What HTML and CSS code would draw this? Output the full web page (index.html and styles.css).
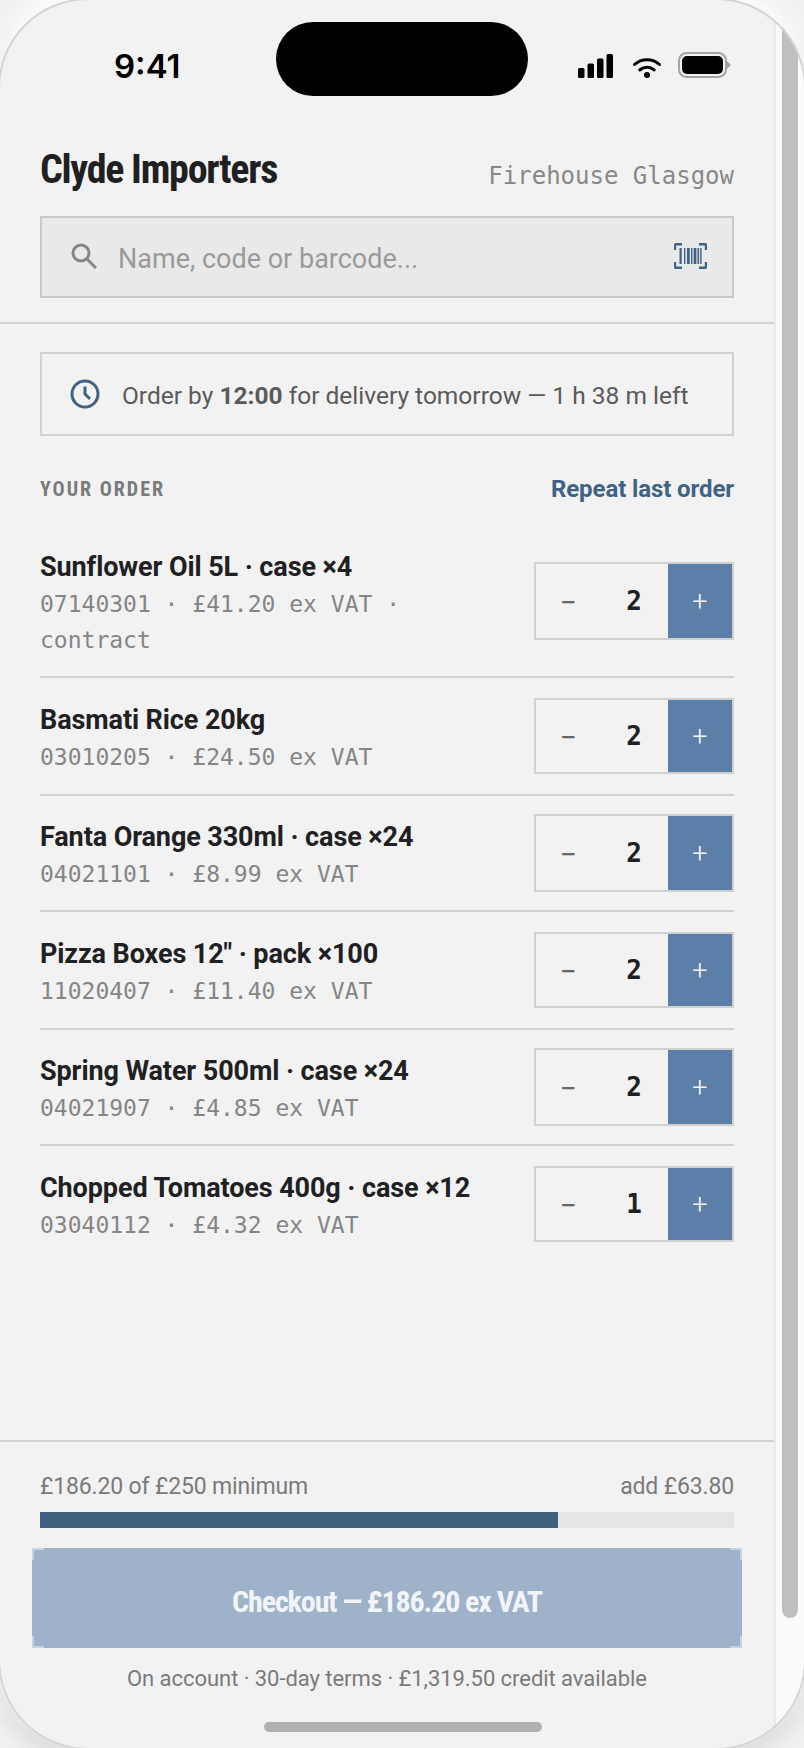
FILE: index.html
```html
<!DOCTYPE html>
<html lang="en">
<head>
<meta charset="utf-8">
<title>Clyde Importers</title>
<link rel="stylesheet" href="styles.css">
</head>
<body>
<div class="phone">
  <div class="notch"></div>
  <div class="home-bar"></div>
  <div class="screen">
    <div class="status">
      <span class="time">9:41</span>
      <div class="status-icons">
        <svg class="sig" viewBox="0 0 35 24"><rect x="0" y="14" width="6.5" height="10" rx="1.5"/><rect x="9.5" y="9.5" width="6.5" height="14.5" rx="1.5"/><rect x="19" y="4.5" width="6.5" height="19.5" rx="1.5"/><rect x="28.5" y="0" width="6.5" height="24" rx="1.5"/></svg>
        <svg class="wifi" viewBox="0 0 28 21"><path d="M1.5 7.5a18.5 18.5 0 0 1 25 0" fill="none" stroke="#000" stroke-width="3" stroke-linecap="round"/><path d="M6.8 13a11 11 0 0 1 14.4 0" fill="none" stroke="#000" stroke-width="3" stroke-linecap="round"/><circle cx="14" cy="18" r="3"/></svg>
        <svg class="batt" viewBox="0 0 53 26"><rect x="1" y="1" width="47" height="24" rx="7.5" fill="none" stroke="#a3a3a3" stroke-width="2"/><rect x="4" y="4" width="41" height="18" rx="5"/><path d="M49 9l4 4-4 4z" fill="#a3a3a3"/></svg>
      </div>
    </div>
    <header class="head">
      <div class="title-row">
        <h1 class="title">Clyde Importers</h1>
        <span class="site">Firehouse Glasgow</span>
      </div>
      <div class="search">
        <svg class="mag" viewBox="0 0 26 26"><circle cx="10" cy="10" r="8" fill="none" stroke="#868686" stroke-width="3"/><path d="M16 16l9 9" stroke="#868686" stroke-width="3"/></svg>
        <span class="ph">Name, code or barcode...</span>
        <svg class="barcode" viewBox="0 0 33 26"><path d="M8 1.2H2a1 1 0 0 0-1 1V7M25 1.2h6a1 1 0 0 1 1 1V7M8 24.8H2a1 1 0 0 1-1-1V19M25 24.8h6a1 1 0 0 0 1-1V19" fill="none" stroke="#3f6285" stroke-width="2.4"/><path d="M5.5 5h2.2v16H5.5zM10 5h1.4v16H10zM13 5h2.8v16H13zM17 5h1.4v16H17zM19.6 5h2.8v16h-2.8zM23.5 5h1.6v16h-1.6zM26.2 5h1.4v16h-1.4z" fill="#3f6285"/></svg>
      </div>
    </header>
    <div class="deadline">
      <svg class="clock" viewBox="0 0 30 30"><circle cx="15" cy="15" r="13" fill="none" stroke="#3f6285" stroke-width="3"/><path d="M15 7.5V15l5 5" fill="none" stroke="#3f6285" stroke-width="3"/></svg>
      <span class="deadline-text">Order by <b>12:00</b> for delivery tomorrow — 1 h 38 m left</span>
    </div>
    <div class="section">
      <span class="eyebrow">YOUR ORDER</span>
      <a class="repeat">Repeat last order</a>
    </div>
    <main class="list">
      <div class="row">
        <div class="info"><div class="name">Sunflower Oil 5L · case ×4</div><div class="meta">07140301 · £41.20 ex VAT · contract</div></div>
        <div class="stepper"><span class="minus">−</span><span class="qty">2</span><span class="plus">+</span></div>
      </div>
      <div class="row">
        <div class="info"><div class="name">Basmati Rice 20kg</div><div class="meta">03010205 · £24.50 ex VAT</div></div>
        <div class="stepper"><span class="minus">−</span><span class="qty">2</span><span class="plus">+</span></div>
      </div>
      <div class="row">
        <div class="info"><div class="name">Fanta Orange 330ml · case ×24</div><div class="meta">04021101 · £8.99 ex VAT</div></div>
        <div class="stepper"><span class="minus">−</span><span class="qty">2</span><span class="plus">+</span></div>
      </div>
      <div class="row">
        <div class="info"><div class="name">Pizza Boxes 12" · pack ×100</div><div class="meta">11020407 · £11.40 ex VAT</div></div>
        <div class="stepper"><span class="minus">−</span><span class="qty">2</span><span class="plus">+</span></div>
      </div>
      <div class="row">
        <div class="info"><div class="name">Spring Water 500ml · case ×24</div><div class="meta">04021907 · £4.85 ex VAT</div></div>
        <div class="stepper"><span class="minus">−</span><span class="qty">2</span><span class="plus">+</span></div>
      </div>
      <div class="row">
        <div class="info"><div class="name">Chopped Tomatoes 400g · case ×12</div><div class="meta">03040112 · £4.32 ex VAT</div></div>
        <div class="stepper"><span class="minus">−</span><span class="qty">1</span><span class="plus">+</span></div>
      </div>
    </main>
    <footer class="foot">
      <div class="progress-label"><span>£186.20 of £250 minimum</span><span>add £63.80</span></div>
      <div class="track"><div class="fill" style="width:74.6%"></div></div>
      <button class="checkout">Checkout — £186.20 ex VAT</button>
      <p class="terms">On account · 30-day terms · £1,319.50 credit available</p>
    </footer>
  </div>
  <div class="scrollbar"><div class="thumb"></div></div>
</div>
</body>
</html>
```
FILE: styles.css
```css
* { box-sizing: border-box; }
html, body { margin: 0; padding: 0; }
body {
  width: 804px;
  height: 1748px;
  overflow: hidden;
  background: #f1f1f1;
  font-family: Roboto, "Liberation Sans", sans-serif;
  color: #1f2022;
}
.phone {
  position: relative;
  width: 808px;
  height: 1752px;
  margin: -2px;
  padding: 2px;
  display: flex;
  border-radius: 90px;
  background: #fafafa;
  box-shadow: 0 -10px 22px #fff, 0 10px 24px rgba(0, 0, 0, .13);
  overflow: hidden;
}
.phone::after {
  content: "";
  position: absolute;
  inset: 0;
  border: 2px solid #d4d4d4;
  border-radius: 90px;
  z-index: 3;
  pointer-events: none;
}
.notch {
  position: absolute;
  left: 278px;
  top: 24px;
  width: 252px;
  height: 74px;
  border-radius: 37px;
  background: #000;
  z-index: 2;
}
.home-bar {
  position: absolute;
  left: 266px;
  top: 1724px;
  width: 278px;
  height: 10px;
  border-radius: 5px;
  background: #b0b0b0;
  z-index: 2;
}
.screen {
  width: 776px;
  height: 100%;
  flex: none;
  display: flex;
  flex-direction: column;
  background: #f2f2f2;
  border-right: 2px solid #eaeaea;
}
.scrollbar {
  flex: 1;
  padding: 0 6px;
}
.thumb {
  width: 16px;
  height: 1618px;
  background: #bfbfbf;
  border-radius: 8px;
}
.status {
  height: 120px;
  flex: none;
  display: flex;
  justify-content: space-between;
  align-items: flex-start;
  padding: 46px 43px 0 114px;
}
.time {
  font-family: Inter, sans-serif;
  font-weight: 600;
  font-size: 33px;
  line-height: 40px;
  color: #000;
}
.status-icons { display: flex; align-items: flex-start; padding-top: 6px; }
.sig { width: 35px; height: 24px; margin-top: 2px; }
.wifi { width: 28px; height: 21px; margin: 5px 17px 0 20px; }
.batt { width: 53px; height: 26px; }
.head {
  flex: none;
  padding: 0 40px 24px;
  border-bottom: 2px solid #d2d2d2;
}
.title-row {
  display: flex;
  justify-content: space-between;
  align-items: flex-end;
  height: 96px;
  padding-bottom: 21px;
}
.title {
  margin: 0;
  font-family: "Roboto Condensed", "Liberation Sans Narrow", Roboto, sans-serif;
  font-weight: 700;
  font-size: 40px;
  line-height: 50px;
  letter-spacing: -1.25px;
}
.site {
  font-family: "DejaVu Sans Mono", monospace;
  font-size: 24px;
  line-height: 30px;
  color: #888;
  margin-bottom: 4px;
}
.search {
  height: 82px;
  display: flex;
  align-items: center;
  padding: 0 25px 0 29px;
  background: #e9e9e9;
  border: 2px solid #c8c8c8;
}
.mag { width: 26px; height: 26px; flex: none; margin-top: -3px; }
.ph {
  flex: 1;
  margin-left: 21px;
  padding-top: 3px;
  font-size: 27px;
  color: #9a9a9a;
}
.barcode { width: 33px; height: 26px; flex: none; margin-top: -2px; }
.deadline {
  flex: none;
  height: 84px;
  margin: 28px 40px 0;
  display: flex;
  align-items: center;
  padding: 0 0 0 28px;
  border: 2px solid #d0d0d0;
}
.clock { width: 30px; height: 30px; flex: none; }
.deadline-text {
  margin-left: 22px;
  padding-top: 2px;
  font-size: 24.5px;
  color: #5a5a5a;
}
.deadline-text b { font-weight: 700; }
.section {
  flex: none;
  height: 90px;
  margin: 0 40px;
  padding-top: 16px;
  display: flex;
  justify-content: space-between;
  align-items: center;
}
.eyebrow {
  font-family: "Roboto Condensed", "Liberation Sans Narrow", Roboto, sans-serif;
  font-weight: 700;
  font-size: 20px;
  letter-spacing: 2px;
  color: #7a7a7a;
}
.repeat {
  font-size: 24px;
  font-weight: 700;
  letter-spacing: -.1px;
  color: #3f6285;
}
.list {
  flex: 1;
  padding: 0 40px;
  min-height: 0;
}
.row {
  display: flex;
  align-items: center;
  justify-content: space-between;
  gap: 24px;
  padding: 20px 0;
  border-bottom: 2px solid #d0d0d0;
}
.row:nth-child(odd) { padding: 18px 0; }
.row:first-child { padding: 20.5px 0; }
.row:last-child { border-bottom: 0; }
.info { min-width: 0; flex: 1; margin: 2px 0 -2px; }
.name {
  font-size: 27px;
  font-weight: 700;
  letter-spacing: -.1px;
  line-height: 36px;
  color: #1f2022;
}
.meta {
  margin-top: 1px;
  font-family: "DejaVu Sans Mono", monospace;
  font-size: 23px;
  line-height: 36px;
  color: #858585;
}
.stepper {
  flex: none;
  width: 200px;
  height: 76px;
  display: grid;
  grid-template-columns: 64px 68px 64px;
  align-items: stretch;
  border: 2px solid #d0d0d0;
}
.row:nth-child(odd) .stepper { height: 78px; }
.minus, .qty, .plus {
  display: flex;
  align-items: center;
  justify-content: center;
}
.minus { font-size: 30px; padding-top: 2px; color: #666; }
.qty {
  padding-bottom: 1px;
  font-family: "DejaVu Sans Mono", monospace;
  font-weight: 700;
  font-size: 26px;
  color: #1f2022;
}
.plus {
  padding-top: 2px;
  font-size: 27px;
  font-weight: 300;
  color: #f4f6f8;
  background: #5b7fa6;
}
.foot {
  flex: none;
  height: 308px;
  padding: 0 40px;
  border-top: 2px solid #d2d2d2;
}
.progress-label {
  display: flex;
  justify-content: space-between;
  height: 70px;
  padding-top: 30px;
  font-size: 23px;
  letter-spacing: -.15px;
  line-height: 30px;
  color: #7a7a7a;
}
.track { height: 16px; background: #e6e6e8; }
.fill { height: 100%; background: #3f6180; }
.checkout {
  display: block;
  width: 710px;
  height: 100px;
  margin: 20px -8px 0;
  padding: 6px 0 0;
  border: 0;
  color: #f2f5f8;
  font-family: "Roboto Condensed", "Liberation Sans Narrow", Roboto, sans-serif;
  font-weight: 700;
  font-size: 30px;
  letter-spacing: -1.1px;
  background-color: #9eb2ca;
  background-repeat: no-repeat;
  --c: linear-gradient(#c6d3e1, #c6d3e1);
  background-image: var(--c), var(--c), var(--c), var(--c), var(--c), var(--c), var(--c), var(--c);
  background-size: 12px 2px, 2px 12px, 12px 2px, 2px 12px, 12px 2px, 2px 12px, 12px 2px, 2px 12px;
  background-position: left top, left top, right top, right top, left bottom, left bottom, right bottom, right bottom;
}
.terms {
  margin: 15px 0 0;
  text-align: center;
  font-size: 22px;
  letter-spacing: -.05px;
  line-height: 32px;
  color: #7a7a7a;
}
```
